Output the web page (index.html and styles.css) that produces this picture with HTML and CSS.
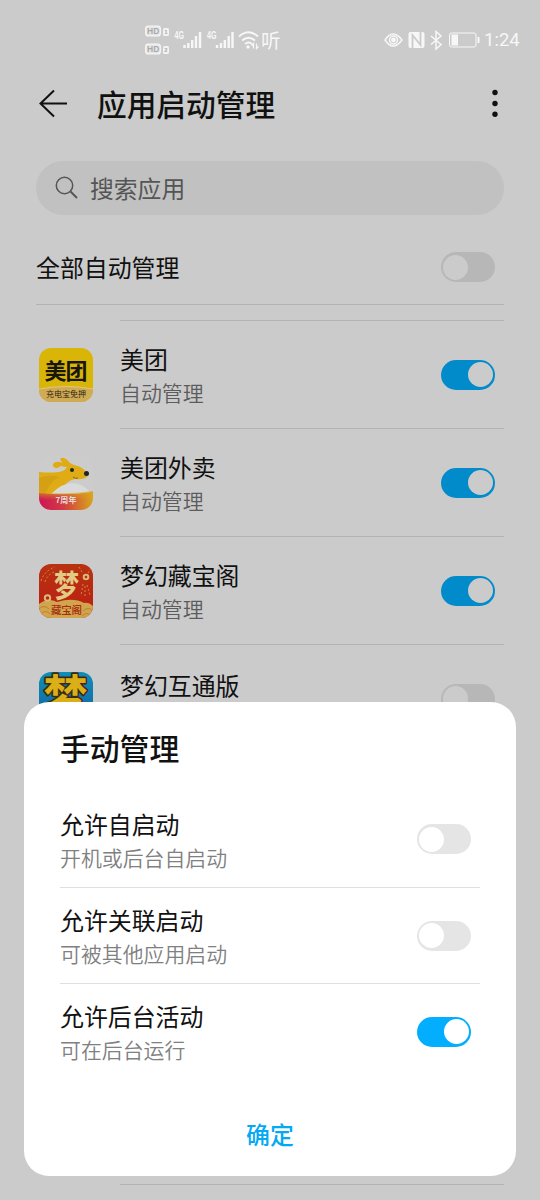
FILE: index.html
```html
<!DOCTYPE html>
<html lang="zh-CN">
<head>
<meta charset="utf-8">
<title>应用启动管理</title>
<link rel="stylesheet" href="styles.css">
</head>
<body>
<div class="screen">
  <div class="status">
    <svg class="status-left" width="116" height="34" viewBox="0 0 116 34" fill="none" stroke="#f7f7f7">
      <rect x="0.7" y="3" width="14.6" height="10" rx="2.5" fill="#e6e6e6" stroke-width="1.2"/>
      <rect x="0.7" y="21" width="14.6" height="10" rx="2.5" fill="#e6e6e6" stroke-width="1.2"/>
      <rect x="18" y="5" width="6" height="8" rx="1.5" fill="#f2f2f2" stroke="none"/>
      <rect x="18" y="23" width="6" height="8" rx="1.5" fill="#f2f2f2" stroke="none"/>
      <g stroke="none">
        <text class="hd" x="2.1" y="11.2">HD</text><text class="hd" x="2.1" y="29.2">HD</text>
        <text class="sim" x="19.3" y="11.4">1</text><text class="sim" x="19.3" y="29.4">2</text>
        <text class="net" x="29.5" y="15.5" textLength="9.500" lengthAdjust="spacingAndGlyphs">4G</text>
        <text class="net" x="62" y="15.5" textLength="9.500" lengthAdjust="spacingAndGlyphs">4G</text>
      </g>
      <path stroke-width="2.4" d="M39.500 25v-3M43.300 25v-5M47.200 25v-8M51 25v-12M55 25V9M72 25v-3M76 25v-5M79.800 25v-8M83.700 25v-12M87.500 25V9"/>
      <path stroke-width="1.8" d="M94 13.500q9.500-8.500 19 0M97 17.500q6.500-5.500 13 0M100 21q3.500-3 7 0"/>
      <circle cx="103" cy="24" r="1.700" fill="#f7f7f7" stroke="none"/>
      <path stroke-width="1.200" d="M108.500 25.500v-5l-2 2M111.500 20.500v5l2-2"/>
    </svg>
    <span class="listen">听</span>
    <svg class="status-right" width="98" height="24" viewBox="0 0 98 24" fill="none" stroke="#f7f7f7" stroke-width="1.500">
      <path d="M1 12q8-12 17 0q-9 12-17 0Z"/><circle cx="9.500" cy="12" r="4"/><circle cx="9.500" cy="12" r="1.700" fill="#f7f7f7"/>
      <rect x="24.500" y="4" width="16" height="16" rx="2" fill="#f7f7f7" stroke="none"/>
      <path stroke="#cbcbcb" stroke-width="1.800" d="M28.500 20V7l8 10V4"/>
      <path d="M47 8l10 8.500-5 4.500V3.500l5 4.500-10 8.500"/>
      <rect x="65.500" y="5" width="26.500" height="14" rx="2" stroke-width="1"/>
      <rect x="67.500" y="6.500" width="6.500" height="11" fill="#f7f7f7" stroke="none"/>
      <path stroke-width="2" d="M94.500 9v6"/>
    </svg>
    <span class="clock">1:24</span>
  </div>

  <header class="header">
    <svg width="30" height="32" viewBox="0 0 30 32" fill="none" stroke="#111" stroke-width="2"><path d="M29 15.500H3M16 2.500L2.500 15.500 16 28.500"/></svg>
    <h1>应用启动管理</h1>
    <svg width="6" height="32" viewBox="0 0 6 32" fill="#111"><circle cx="3" cy="4.500" r="2.700"/><circle cx="3" cy="15.500" r="2.700"/><circle cx="3" cy="26.300" r="2.700"/></svg>
  </header>

  <div class="search">
    <svg width="24" height="24" viewBox="0 0 24 24" fill="none" stroke="#555" stroke-width="1.500"><circle cx="9.500" cy="9.500" r="8.200"/><path stroke-width="2" d="M15.500 15.500L22 22"/></svg>
    <span>搜索应用</span>
  </div>

  <div class="all"><span>全部自动管理</span><i class="switch dim"></i></div>

  <main class="list">
    <div class="app">
      <svg class="icon" viewBox="0 0 54 54">
        <rect width="54" height="54" fill="#d9b508"/>
        <path d="M0 41q27-5 54 0v13H0Z" fill="#d0ab55"/><path d="M0 41q27-5 54 0" fill="none" stroke="#e2c582"/>
        <text class="mt-logo" x="5.500" y="30.500" textLength="43">美团</text>
        <text class="mt-note" x="7" y="49" textLength="40">充电宝免押</text>
      </svg>
      <div class="info"><div><b>美团</b><small>自动管理</small></div><i class="switch dim on"></i></div>
    </div>
    <div class="app">
      <svg class="icon" viewBox="0 0 54 54">
        <defs>
          <linearGradient id="sash"><stop offset="0" stop-color="#cd1555"/><stop offset=".45" stop-color="#d23b43"/><stop offset="1" stop-color="#d9a51c"/></linearGradient>
          <linearGradient id="fade" x2="0" y2="1"><stop offset="0" stop-color="#d9a51c" stop-opacity=".75"/><stop offset="1" stop-color="#d9a51c" stop-opacity="0"/></linearGradient>
        </defs>
        <rect width="54" height="54" fill="#cccccc"/>
        <path d="M0 15q10 1 20 0q6-1 8-5q-3 0-6-1q-2 2-5 2q-4-1-3-4q2-3 7-2l3 1q-4-3-2-5q4-1 8 4q2 2 5 3q6 1 9 4l4 3q2 3 0 5q-4 3-12 2q-6 1-10 6q-7 9-15 12H0Z" transform="translate(0 1)" fill="#dfac15"/>
        <path d="M0 22q11-4 20-1Q9 27 5 42H0Z" fill="#c98e13" opacity=".4"/>
        <path d="M12 38q22-22 41 0Z" fill="#dadada"/>
        <circle cx="33" cy="14" r="2" fill="#222"/><circle cx="47.500" cy="17.500" r="2.500" fill="#222"/>
        <path d="M34 21q2 2 5 1" fill="none" stroke="#966612"/>
        <path d="M0 37q27 3 54-1v18H0Z" fill="url(#sash)"/><path d="M0 36q27 3 54-1v9H0Z" fill="url(#fade)"/>
        <text class="year" x="16.500" y="46.500" textLength="21">7周年</text>
      </svg>
      <div class="info"><div><b>美团外卖</b><small>自动管理</small></div><i class="switch dim on"></i></div>
    </div>
    <div class="app">
      <svg class="icon" viewBox="0 0 54 54">
        <defs><linearGradient id="red" x2="0" y2="1"><stop offset="0" stop-color="#b83212"/><stop offset="1" stop-color="#bd1d12"/></linearGradient></defs>
        <rect width="54" height="54" fill="url(#red)"/>
        <g fill="none" stroke="#d08b3c" stroke-width="1" stroke-dasharray="2 2"><path d="M2 17q3-10 14-14M6 18q2-7 9-10M44 20l-2 12M48 21l3 10M46 22l0 10M40 3l3 5M52 4l-3 5"/></g>
        <path d="M0 40q9-7 18-2q16-5 27 1q5-1 9 3v12H0Z" fill="#d0a54d"/>
        <g fill="none" stroke="#b9772b" stroke-width=".8"><path d="M0 45q5-5 10 0M2 50q4-5 9 0M44 47q5-5 10 0M43 52q5-5 9 0"/></g>
        <g fill="none" stroke="#d8b977" stroke-width="2"><circle cx="47" cy="13" r="2.300"/><circle cx="8.500" cy="34" r="2.700"/></g>
        <text class="dream" transform="translate(15 32.500) scale(.93 1.120)">梦</text>
        <text class="vault" x="12" y="50" textLength="31">藏宝阁</text>
      </svg>
      <div class="info"><div><b>梦幻藏宝阁</b><small>自动管理</small></div><i class="switch dim on"></i></div>
    </div>
    <div class="app">
      <svg class="icon" viewBox="0 0 54 54">
        <defs><linearGradient id="sea" x2="0" y2="1"><stop offset="0" stop-color="#108eb8"/><stop offset="1" stop-color="#125da0"/></linearGradient></defs>
        <rect width="54" height="54" fill="url(#sea)"/>
        <text class="dream big" transform="translate(4.500 43) scale(1 1.080)">梦</text>
      </svg>
      <div class="info top"><b>梦幻互通版</b><i class="switch dim"></i></div>
    </div>
    <div class="app gap"></div><div class="app gap"></div><div class="app gap"></div><div class="app gap"></div>
    <div class="app gap"><div class="info"></div></div>
  </main>

  <section class="dialog">
    <h2>手动管理</h2>
    <div class="option"><div><b>允许自启动</b><small>开机或后台自启动</small></div><i class="switch"></i></div>
    <div class="option"><div><b>允许关联启动</b><small>可被其他应用启动</small></div><i class="switch"></i></div>
    <div class="option"><div><b>允许后台活动</b><small>可在后台运行</small></div><i class="switch on"></i></div>
    <button class="confirm">确定</button>
  </section>
</div>
</body>
</html>
```

FILE: styles.css
```css
* { box-sizing: border-box; }
body { margin: 0; font-family: "Noto Sans CJK SC", sans-serif; }
.screen { position: relative; width: 540px; height: 1200px; overflow: hidden; background: #cbcbcb; color: #111; }

.status { display: flex; align-items: center; height: 72px; padding: 8px 21px 0 145px; color: #f7f7f7; }
.status-left { flex: none; }
.listen { flex: none; width: 20px; font-size: 19.5px; line-height: 30px; }
.status-right { flex: none; margin-left: auto; }
.clock { flex: none; width: 34px; margin-left: 2px; margin-right: 1px; font: 18.5px/24px Roboto, sans-serif; white-space: nowrap; }
.hd { font: bold 8.5px "Liberation Sans", sans-serif; fill: #aaa; }
.sim { font: bold 6px "Liberation Sans", sans-serif; fill: #aaa; }
.net { font: bold 10px "Liberation Sans", sans-serif; fill: #f7f7f7; }

.header { display: flex; align-items: center; height: 64px; padding: 0 42px 0 38px; }
.header h1 { flex: 1; margin: 0 0 0 29px; font-size: 29.7px; font-weight: 500; line-height: 40px; }

.search { display: flex; align-items: center; gap: 11px; height: 54px; margin: 25px 36px 0; padding-left: 19px; border-radius: 27px; background: #c1c1c1; color: #555; font-size: 23.8px; line-height: 32px; }
.all { display: flex; align-items: center; justify-content: space-between; height: 90px; margin: 0 36px; padding: 15px 9px 0 0; border-bottom: 1px solid #b3b3b3; font-size: 23.9px; line-height: 32px; }

.list { margin-top: 15px; }
.app { display: flex; height: 108px; padding: 0 36px 0 39px; }
.icon { flex: none; width: 54px; height: 54px; margin: 28px 27px 0 0; border-radius: 12px; }
.info { flex: 1; display: flex; align-items: center; justify-content: space-between; padding-right: 9px; border-top: 1px solid #b3b3b3; }
.info.top b { align-self: flex-start; margin-top: 21px; }
.gap .info { margin-left: 81px; }
b, small { display: block; font-weight: 400; }
b { padding-top: 2px; font-size: 23.9px; line-height: 33px; }
small { padding-top: 1px; font-size: 20.9px; font-weight: 350; line-height: 33px; color: #5c5c5c; }

.switch { flex: none; width: 54.5px; height: 30px; padding: 2.5px; border-radius: 15px; background: #e5e5e5; }
.switch::before { content: ""; display: block; width: 25px; height: 25px; border-radius: 50%; background: #fff; }
.switch.on { background: #03aeff; }
.switch.on::before { margin-left: 24.5px; }
.switch.dim { background: #b7b7b7; }
.switch.dim::before { background: #cbcbcb; }
.switch.dim.on { background: #028bcb; }

.mt-logo { font: bold 22px "Noto Sans CJK SC", sans-serif; fill: #171608; }
.mt-note { font: 400 8px "Noto Sans CJK SC", sans-serif; fill: #302410; }
.year { font: bold 8px "Noto Sans CJK SC", sans-serif; fill: #e5dcdc; }
.vault { font: 500 10.5px "Noto Sans CJK SC", sans-serif; fill: #a72c12; }
.dream { font: bold 27px "Noto Sans CJK SC", sans-serif; fill: #e1ca84; }
.dream.big { font-size: 44px; fill: #dbaf17; stroke: #3c2b12; stroke-width: 3px; stroke-linejoin: round; paint-order: stroke; }

/* The dialog sits over the dimmed list. */
.dialog { position: absolute; left: 24px; top: 702px; width: 492px; height: 474px; padding: 25px 36px 0; border-radius: 25px; background: #fff; }
.dialog h2 { margin: 0 0 24px; font-size: 29.8px; font-weight: 500; line-height: 40px; }
.option { display: flex; align-items: center; justify-content: space-between; height: 96px; padding-right: 9px; }
.option + .option { border-top: 1px solid #dfdfdf; }
.option small { color: #808080; }
.confirm { display: block; width: 100%; margin-top: 35px; padding: 0; border: 0; background: none; color: #03a9f4; font: 500 23.9px/40px "Noto Sans CJK SC", sans-serif; }
```
